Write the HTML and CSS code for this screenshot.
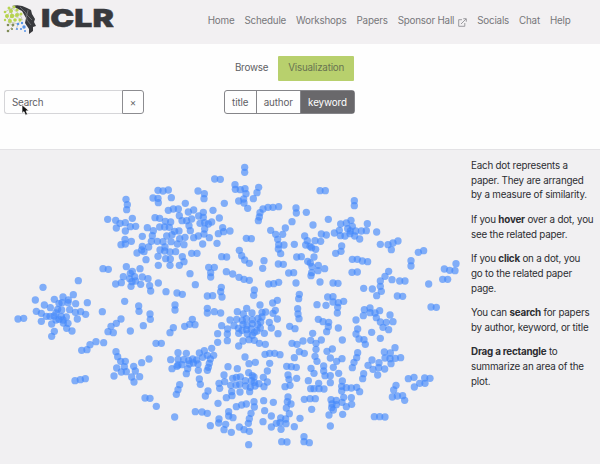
FILE: index.html
```html
<!DOCTYPE html>
<html lang="en">
<head>
<meta charset="utf-8">
<title>ICLR</title>
<link rel="stylesheet" href="styles.css">
</head>
<body>
<header class="navbar">
  <svg class="logo" width="114" height="38" viewBox="0 0 114 38" role="img" aria-label="ICLR">
    <path class="head" d="M12 6Q20 4 27 8L31 10 32 14 35 19 34 22 36 26 33 27 33 31 29 34 29 29 25 23 26 18 22 11Z"/>
    <path class="crack" d="M20 7l6 6 1 7 4 5M28 10l-1 5 5 5"/>
    <path class="links" d="M5 12l7-4 6 5 4 5-4 6-7-2-5-5 4-5 6 5 7 3M8 22l5 4-5 5M18 24l-2 6M12 8l-1 8-3 6"/>
    <g class="lime">
      <circle cx="5" cy="12" r="1.3"/><circle cx="9" cy="8" r="1.5"/><circle cx="14" cy="7" r="1.6"/><circle cx="11" cy="11" r="2"/><circle cx="17" cy="10" r="1.6"/><circle cx="7" cy="16" r="2"/><circle cx="12" cy="16" r="2.2"/><circle cx="17" cy="15" r="2"/><circle cx="21" cy="14" r="1.5"/><circle cx="10" cy="21" r="1.9"/><circle cx="15" cy="20" r="1.8"/><circle cx="20" cy="20" r="1.6"/><circle cx="5" cy="20" r="1.2"/>
    </g>
    <g class="olive"><circle cx="8" cy="25" r="1.3"/><circle cx="13" cy="25" r="1.4"/><circle cx="8" cy="31" r="1.3"/><circle cx="12" cy="29" r="1.1"/></g>
    <g class="blue"><circle cx="18" cy="24" r="1.3"/><circle cx="22" cy="23" r="1.2"/><circle cx="24" cy="27" r="1.7"/><circle cx="21" cy="29" r="1.1"/><circle cx="17" cy="29" r="1"/><circle cx="25" cy="31" r="1"/></g>
    <text class="wordmark" x="41" y="27" textLength="73" lengthAdjust="spacingAndGlyphs">ICLR</text>
  </svg>
  <nav class="menu">
    <a>Home</a><a>Schedule</a><a>Workshops</a><a>Papers</a>
    <a class="external">Sponsor Hall <svg width="9" height="9" viewBox="0 0 9 9"><path d="M4 1.7H.7v6.6h6.1V5M3 6l5-5M5.3.7h3v3"/></svg></a>
    <a>Socials</a><a>Chat</a><a>Help</a>
  </nav>
</header>
<section class="controls">
  <div class="tabs"><a class="tab">Browse</a><a class="tab active">Visualization</a></div>
  <div class="filters">
    <div class="search"><span class="field">Search</span><span class="clear">×</span></div>
    <div class="group"><span>title</span><span>author</span><span class="selected">keyword</span></div>
  </div>
</section>
<main class="content">
  <svg class="plot" width="465" height="314" viewBox="0 150 465 314"></svg>
  <aside class="help">
    <p>Each dot represents a<br>paper. They are arranged<br>by a measure of similarity.</p>
    <p>If you <b>hover</b> over a dot, you<br>see the related paper.</p>
    <p>If you <b>click</b> on a dot, you<br>go to the related paper<br>page.</p>
    <p>You can <b>search</b> for papers<br>by author, keyword, or title</p>
    <p><b>Drag a rectangle</b> to<br>summarize an area of the<br>plot.</p>
  </aside>
</main>
<svg class="cursor" width="9" height="12" viewBox="0 0 9 12"><path d="M1 .8v8.5l2-1.7 1.5 3.6 2-.9L5 6.9l2.9-.2Z"/></svg>
<script src="plot.js"></script>
</body>
</html>
```
FILE: styles.css
```css
* { box-sizing: border-box; }
body {
  margin: 0;
  width: 600px;
  height: 464px;
  overflow: hidden;
  background: #fefefe;
  color: #2c2d31;
  font: 9.8px/14.7px Inter, "Liberation Sans", sans-serif;
  letter-spacing: -.2px;
}
.navbar {
  display: flex;
  justify-content: space-between;
  height: 44px;
  padding-right: 29.5px;
  background: #f2f0f2;
}
.head { fill: #38393d; }
.crack { fill: none; stroke: #8f9094; stroke-width: .6; }
.links { fill: none; stroke: #a3aa8b; stroke-width: .5; }
.lime { fill: #b8d451; }
.olive { fill: #808b57; }
.blue { fill: #5795e8; }
.wordmark { font: 900 25px Inter, sans-serif; letter-spacing: 0; fill: #38393d; stroke: #38393d; stroke-width: .4; }
.menu {
  display: flex;
  align-items: flex-start;
  gap: 10px;
  padding-top: 14px;
  color: #77777a;
  white-space: nowrap;
}
.external { display: flex; align-items: center; gap: 4px; }
.external svg { fill: none; stroke: #929296; stroke-width: .9; margin-top: 2px; }
.controls {
  height: 106px;
  padding-top: 12px;
  border-bottom: 1px solid #e3e2e5;
  color: #606064;
}
.tabs { display: flex; justify-content: center; height: 25px; padding-right: 21px; }
.tab { padding: 5px 10px; }
.active { background: #b8d06d; border-radius: 1px; color: #697451; }
.filters { display: flex; gap: 80px; margin: 9px 0 0 4px; }
.search, .group { display: flex; height: 24px; }
.search { width: 140px; line-height: 23px; }
.field {
  width: 118px;
  padding-left: 7px;
  border: 1px solid #d5d5d8;
  border-right: 0;
  border-radius: 3px 0 0 3px;
}
.clear {
  flex: 1;
  border: 1px solid #8c8c90;
  border-radius: 0 3px 3px 0;
  text-align: center;
}
.group {
  border: 1px solid #858589;
  border-radius: 3px;
  line-height: 23px;
  letter-spacing: -.1px;
}
.group span { padding: 0 7.1px; }
.group span + span { border-left: 1px solid #858589; }
.group .selected { background: #69686b; color: #fff; }
.content { display: flex; height: 314px; background: #f1f0f2; }
.plot { fill: #4389fb; fill-opacity: .65; }
.help { padding: 9px 0 0 6px; white-space: nowrap; }
.help p { margin: 0 0 9.8px; }
.help b { font-weight: 700; }
.cursor { position: absolute; left: 21px; top: 104px; fill: #111; stroke: #fff; stroke-width: .7; }
```
FILE: plot.js
```js
// Each tile has an origin in pixels; its points are in thirds of a pixel.
const tiles = [
  [0, 240, `54,237 71,235 129,142 235,122 106,180 133,195 163,178 189,171 220,164 205,180 227,191 262,188 151,203 177,190 186,188 204,188 109,214 124,220 185,210 173,208 209,209 168,219 139,229 124,244 162,228 150,229 184,229 199,231 226,217 242,215 257,223 232,237 189,240 204,250 177,238 168,240 155,252 190,249 200,265 216,273 163,274 155,289 245,331 261,329 270,314 225,422 241,419 256,416`],
  [90, 150, `108,148 112,164 110,179 53,208 77,211 79,234 90,220 106,218 127,205 121,230 137,229 106,243 105,268 124,274 93,284 106,282 204,121 219,123 235,120 189,144 204,145 205,158 244,143 286,160 324,123 235,181 250,177 265,177 295,186 311,180 268,197 195,203 209,205 226,214 242,216 276,212 290,212 305,207 297,227 209,231 224,231 238,232 172,233 190,242 254,244 267,243 301,242 157,259 187,257 230,258 246,254 285,262 269,266 311,263 325,258 184,274 202,274 219,275 243,275 262,282 282,284 157,289 176,291 141,309 155,300 162,305 210,300 225,291 224,303 240,306 257,305 204,319 227,326 241,327 168,329 205,346 240,346 277,320 282,335 268,346 305,310 321,310 300,371 316,404 39,356 55,358 109,350 127,364 150,356 121,370 100,380 119,386 134,380 157,381 174,386 126,395 137,393 94,398 77,402 123,409 152,403 205,399 179,407 182,423`],
  [200, 150, `134,52 134,67 44,87 61,88 105,104 106,118 121,119 135,116 138,131 176,112 171,128 160,146 116,153 131,147 132,159 143,175 73,160 39,181 58,204 13,131 12,146 10,187 -4,198 10,202 35,216 14,218 25,222 0,220 14,237 68,233 71,245 55,251 90,243 12,252 28,263 8,282 51,280 236,170 219,172 204,172 189,177 180,188 178,201 175,212 288,174 289,189 319,187 276,215 212,241 256,234 227,253 248,253 233,268 236,284 252,285 235,297 242,311 283,283 139,265 154,266 118,301 125,317 134,330 148,340 65,320 80,321 192,332 188,355 235,342 250,343 26,352 43,352 32,368 32,381 79,365 98,372 117,382 132,388 148,391 266,369 281,368 206,402 221,401 236,397 288,399 64,412 163,420 290,321 304,320 323,334 317,285 322,272 314,258`],
  [310, 150, `30,122 46,122 133,152 133,167 55,208 9,225 92,222 109,219 123,211 172,221 127,229 113,236 121,243 137,243 154,243 169,242 200,246 73,249 88,241 91,257 105,258 120,251 134,258 149,267 34,252 49,255 15,272 32,274 5,293 17,298 0,289 12,321 1,339 6,350 25,346 44,356 24,362 5,368 3,377 95,288 93,304 77,310 127,328 142,328 157,333 173,335 126,367 142,366 211,283 234,284 249,279 264,273 244,299 325,307 341,302 303,332 303,348 438,341 403,357 419,361 435,362 398,388 413,388 356,402 236,364 225,379 246,389 269,393 285,393 211,393 211,409 214,424 161,415 187,417 30,396 69,399 84,400`],
  [90, 290, `18,155 41,158 37,65 104,34 146,48 147,64 121,123 93,87 79,100 63,109 54,125 70,128 180,72 181,88 160,107 250,113 240,128 284,109 299,103 307,88 315,104 255,45 255,60 228,5 261,9 277,13 198,160 214,160 78,185 83,200 92,214 106,214 103,230 80,234 94,246 109,245 72,258 131,229 136,243 125,261 149,260 132,276 155,218 177,207 165,324 180,325 199,349 254,381 264,188 289,190 242,209 264,208 281,209 296,211 308,207 320,210 264,225 276,224 298,222 310,219 324,222 246,236 261,229 293,236 289,251 325,241 328,189 328,267 269,284 264,299 259,313`],
  [200, 290, `22,18 38,17 62,5 66,21 161,16 298,13 296,26 218,39 232,31 180,45 22,55 22,69 43,65 62,69 293,56 294,72 297,86 112,65 140,55 156,69 130,72 186,67 197,66 219,70 226,61 90,90 110,88 127,91 139,86 157,89 174,85 186,81 182,96 208,97 232,87 65,107 83,117 102,107 115,115 129,103 141,106 157,101 173,104 126,121 140,119 154,117 163,127 116,130 142,132 157,136 171,123 181,114 193,130 214,114 234,131 53,131 82,132 82,152 53,157 129,153 147,149 163,151 116,168 178,160 196,163 269,109 285,116 276,160 291,163 309,153 298,185 313,190 283,203 13,182 35,175 8,202 22,196 41,196 31,207 28,220 25,232 22,241 84,230 112,236 135,201 147,221 166,217 209,220 195,193 209,190 224,190 240,194 202,243 190,262 146,248 157,257 72,255 57,280 74,275 98,265 109,262 121,261 92,286 108,285 119,283 136,272 137,288 154,272 162,261 177,281 165,288 151,292 149,305 192,290 202,276 163,277 120,306 95,305 96,317 79,323 59,295 54,340 1,283 24,303 16,318 109,350 125,345 139,342 162,335 163,351 191,332 220,337 194,362 214,378 189,395 86,365 86,378 99,383 57,387 56,399 77,403 72,419 94,427 31,407 6,366 22,370 118,411 132,419 148,424 145,400 148,386 153,370 146,464 260,229 274,230 289,232 264,255 267,268 290,265 255,290 270,286 264,321 262,335 273,342 259,354 268,371 242,384 240,398 229,400 258,401 257,387 214,411 243,418 300,385 283,410 245,455 261,456 312,440 312,455 -14,365`],
  [310, 290, `53,21 69,20 69,36 85,38 101,34 83,52 82,69 21,44 48,46 25,88 39,95 56,97 55,110 50,125 85,114 8,130 2,151 18,160 34,150 97,150 18,178 51,184 67,177 15,199 21,214 61,204 80,214 96,206 41,228 41,243 70,232 86,250 3,235 12,250 45,257 61,257 61,278 26,280 2,296 12,296 27,296 42,297 0,326 16,326 -5,272 -17,328 5,358 200,17 262,18 278,19 363,51 379,52 163,59 180,54 180,68 160,77 209,62 195,69 199,83 138,90 143,117 138,132 147,147 162,149 166,163 185,127 211,145 240,75 249,95 211,96 229,97 219,112 236,119 143,188 140,203 132,217 127,233 161,251 158,266 186,210 174,226 189,238 207,218 206,233 224,237 203,255 223,186 241,189 255,173 225,204 240,206 256,205 272,203 243,221 97,273 95,289 95,303 109,293 124,294 140,292 149,305 101,322 124,323 63,329 79,331 96,337 66,342 79,344 65,353 70,360 109,350 125,343 57,375 98,373 61,408 -2,458 258,286 251,300 247,321 262,318 278,317 284,331 295,266 312,262 313,291 329,280 344,264 345,280 360,265 193,380 209,380 225,381`]
];
const plot = document.querySelector(".plot");
const drawn = [];
tiles.forEach(([left, top, points], tile) => {
  for (const point of points.split(" ")) {
    const [px, py] = point.split(",").map(Number);
    const x = left + px / 3;
    const y = top + py / 3;
    // A dot on the seam between two tiles is listed in both: draw it once.
    if (drawn.some(d => d.tile !== tile && Math.hypot(d.x - x, d.y - y) < 1.8)) continue;
    drawn.push({ tile, x, y });
    const dot = document.createElementNS("http://www.w3.org/2000/svg", "circle");
    dot.setAttribute("cx", x);
    dot.setAttribute("cy", y);
    dot.setAttribute("r", 3.65);
    plot.appendChild(dot);
  }
});
```
